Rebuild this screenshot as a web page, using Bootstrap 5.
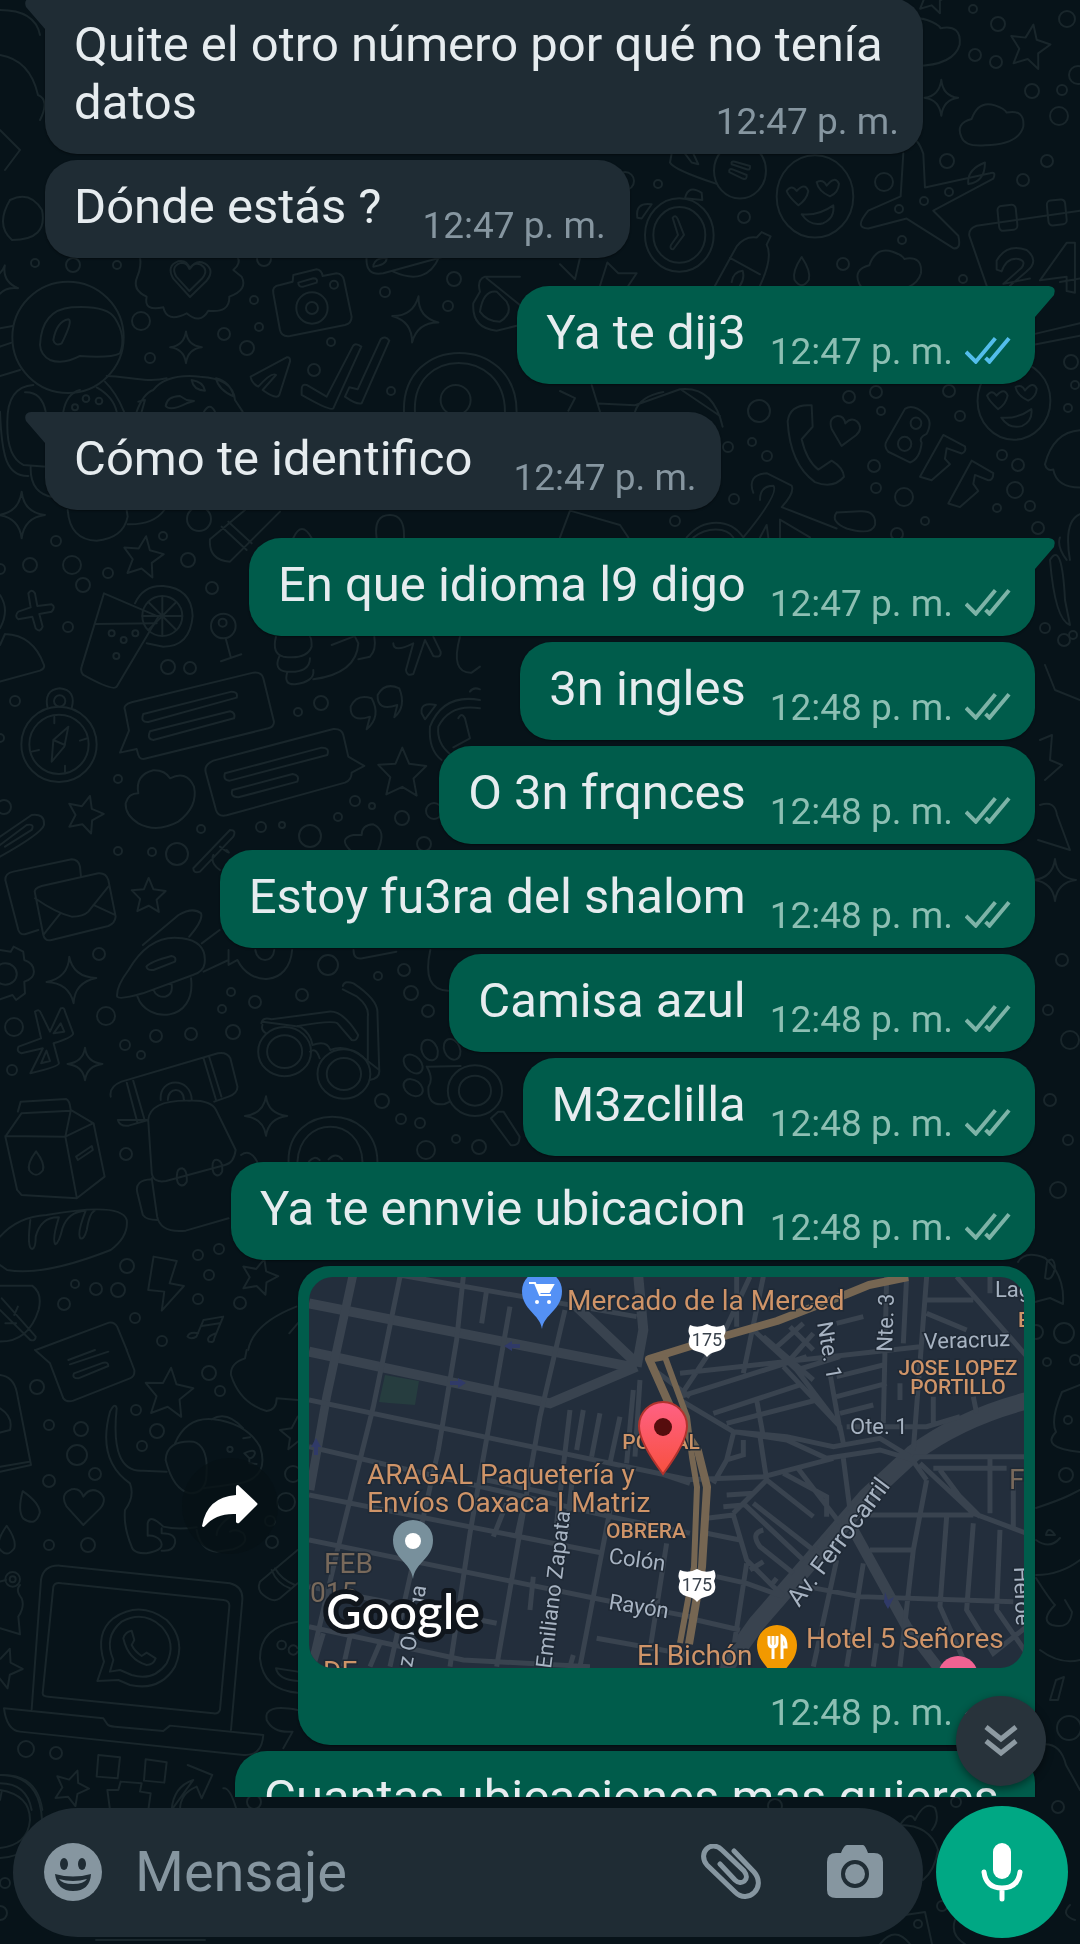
<!DOCTYPE html>
<html lang="es">
<head>
<meta charset="utf-8">
<meta name="viewport" content="width=device-width, initial-scale=1">
<title>Chat</title>
<link href="https://cdn.jsdelivr.net/npm/bootstrap@5.3.0/dist/css/bootstrap.min.css" rel="stylesheet">
<style>
:root{--bg:#071319;--in:#1f2c34;--out:#005c4b;--muted:#8696a0;--ink:#e6ecef}
body{background:var(--bg);color:var(--ink);font-family:Roboto,"Noto Sans",sans-serif;font-size:49px;line-height:58px}
.wallpaper{position:fixed;inset:0;width:100%;height:100%;z-index:-1;fill:none;stroke:#19262b;stroke-linecap:round;stroke-linejoin:round}
.wallpaper path,.wallpaper circle,.wallpaper rect,.wallpaper ellipse{vector-effect:non-scaling-stroke;stroke-width:2}
.chat{min-height:0}
.thread{margin-top:-2px;padding:0 45px 0 45px;gap:6px}
.bubble{position:relative;border-radius:32px;padding:18px 24px 22px 29px;gap:24px;box-shadow:0 1px 2px rgba(0,0,0,.4);white-space:nowrap;flex-shrink:0}
.bubble-in{background:var(--in);align-self:flex-start;gap:41px}
.bubble-out{background:var(--out);align-self:flex-end}
.turn{margin-top:22px}
.wrapping{white-space:normal;max-width:878px;width:100%;gap:0}
.tail-in{border-top-left-radius:0}
.tail-out{border-top-right-radius:0}
.tail-in::before,.tail-out::after{content:"";position:absolute;top:0;width:21px;height:34px;background:inherit}
.tail-out::after{left:calc(100% - 1px);clip-path:path("M0 0H15Q23 1 20 9L1 31V34H0Z")}
.tail-in::before{right:calc(100% - 1px);clip-path:path("M21 0H6Q-2 1 1 9L20 31V34H21Z")}
.stamp{font-size:37px;line-height:42px;color:var(--muted);align-self:flex-end;margin-bottom:-11px;gap:12px}
.wrapping .stamp{position:absolute;right:24px;bottom:11px;margin:0}
.bubble-out .stamp{color:#8dbfb3}
.ticks{width:46px;height:28px;fill:none;stroke:#7db3a7;stroke-width:4;margin-bottom:4px}
.read .ticks{stroke:#53bdeb}
.map-row{gap:20px}
.map-bubble{width:737px;max-width:100%;padding:11px 11px 22px;gap:24px}
.map-bubble .stamp{margin-right:13px;}
.map-view{display:block;width:100%;height:auto;border-radius:24px;background:#232e3c}
.map-view .road{fill:none;stroke:#39434f}
.map-view .poi{fill:#cf9468;font-size:28px;paint-order:stroke;stroke:#1f2935;stroke-width:3px}
.map-view .zone{fill:#cf9468;font-size:21px;font-weight:500;paint-order:stroke;stroke:#1f2935;stroke-width:3px}
.map-view .dim{fill:#78695b}
.map-view .street{fill:#a7b3c2;font-size:22px;paint-order:stroke;stroke:#1f2935;stroke-width:3px}
.map-view .avenue{font-size:25px}
.share{width:96px;height:96px;border-radius:50%;border:0;background:rgba(7,17,22,.75)}
.jump{position:absolute;right:34px;bottom:11px;width:90px;height:90px;border:0;border-radius:50%;background:#28333b;box-shadow:0 3px 8px rgba(0,0,0,.45)}
.last{width:800px;max-width:100%;height:140px}
.composer{padding:9px 12px 6px 13px;gap:13px}
.entry{height:129px;border-radius:65px;background:var(--in);padding:0 40px 0 31px;min-width:0}
.entry input{background:none;border:0;outline:0;color:var(--ink);font-size:56px;line-height:66px;width:0;min-width:0;margin-left:32px;padding:0}
.entry input::placeholder{color:var(--muted);opacity:1}
.tool{border:0;background:none;padding:0;color:var(--muted);flex:none}
.clip-tool{margin-right:66px}
.mic{width:132px;height:132px;border-radius:50%;border:0;background:#00a884;flex:none}
</style>
<script src="https://cdn.jsdelivr.net/npm/bootstrap@5.3.0/dist/js/bootstrap.bundle.min.js"></script>
</head>
<body class="vh-100 d-flex flex-column overflow-hidden">

<svg class="wallpaper" viewBox="0 0 1080 1944" preserveAspectRatio="xMidYMin slice" aria-hidden="true">
  <defs>
    <path id="star" d="M0-60L17-20L60-14L28 17L36 60L0 38L-40 57L-30 14L-60-17L-17-20Z"/>
    <path id="spark" d="M0-70Q6-8 70 0Q8 8 0 70Q-8 8-70 0Q-8-8 0-70Z"/>
    <path id="hrt" d="M0 55L-50 0Q-72-38-36-52Q-10-58 0-30Q18-58 44-46Q76-26 50 6Z"/>
    <path id="drop" d="M0-45Q32 0 24 26Q0 60-24 26Q-32 0 0-45Z"/>
    <path id="cloud" d="M-90 30Q-110-10-60-22Q-40-75 10-60Q40-50 45-40Q100-50 95 0Q80 50-20 52Q-80 56-90 30Z"/>
    <g id="love"><circle r="115"/><path d="M-50 25Q-80 0-85-15Q-70-35-55-15Q-30-40-20-15Q-25 10-50 25ZM45 0Q10-15 5-40Q25-50 35-30Q60-60 72-35Q70-10 45 0ZM-40 50Q10 55 55 25Q60 60 25 75Q-15 85-40 50Z"/></g>
    <g id="clock"><circle r="103"/><circle r="78"/><path d="M-20-48Q-12-58-5-45L14 0L-18 40Q-30 40-25 28L-4 0Z"/></g>
  </defs>

  <g transform="translate(0 250) scale(.3333)">
    <circle cx="204" cy="262" r="167"/><path d="M120 285Q125 180 215 172Q320 165 345 205Q380 260 360 310Q330 325 240 318Q190 345 150 330Q122 315 120 285ZM160 270Q170 215 205 208Q220 210 185 280Q165 290 160 270Z"/>
    <path d="M100 405Q20 410 22 520Q20 620 70 645L140 650M75 427Q125 425 137 485M190 485Q200 430 240 420M290 412Q340 440 350 485M320 378C380 378 440 400 500 385M315 395Q350 430 372 485M0 378L60 360M0 235L38 228M0 290L35 278M0 485C5 620 20 680 85 678M92 652Q90 730 160 742"/>
    <circle cx="258" cy="446" r="10"/><circle cx="297" cy="453" r="10"/><circle cx="225" cy="472" r="9"/>
    <path d="M420 20Q425 50 412 80Q395 120 440 140Q430 185 490 172Q500 220 560 190Q600 225 625 182Q690 190 688 140Q745 120 725 80L700 60Q725 40 712 20"/>
    <use href="#hrt" transform="translate(570 86)"/><use href="#hrt" transform="translate(568 80) scale(.78)"/>
    <path d="M410 485Q430 430 460 420Q500 370 600 380Q700 385 705 450L728 485M415 455L435 450L425 485M497 468Q500 440 540 438L560 450L582 453L560 460Q510 485 497 468ZM575 390Q610 395 615 422Q580 420 575 390ZM648 385Q690 395 702 440Q655 420 648 385ZM612 485Q630 455 645 485"/>
    <path d="M752 380L860 322Q872 320 870 335L838 435Q830 450 788 420L828 375Q815 365 775 410Q755 400 752 380ZM905 420Q905 400 920 405L980 440L1058 290Q1065 275 1084 290L1000 475Q992 485 905 435ZM1035 440L1048 412L1073 418L1142 268Q1155 255 1168 272L1085 460Q1070 465 1035 440Z"/>
    <path d="M820 130Q815 108 840 105L878 95L880 75L950 58Q965 60 968 78L1010 70Q1028 72 1032 90L1055 200Q1055 220 1035 225L870 258Q845 262 840 240ZM895 98L940 85Q955 85 950 98L910 110Q895 112 895 98Z"/>
    <circle cx="936" cy="174" r="47"/><circle cx="936" cy="174" r="18"/><circle cx="1002" cy="104" r="12"/>
    <path d="M1100 20Q1095 80 1150 70L1330 20M1180 65Q1280 110 1318 20M1120 45Q1130 20 1160 25Q1160 45 1120 50M1560 80H1455Q1430 90 1440 125L1420 160Q1415 235 1490 242L1560 225M1460 85L1560 165M1440 185Q1450 120 1490 125L1520 155Q1540 190 1500 215Q1460 215 1440 185Z"/>
    <path d="M1212 485C1205 250 1550 250 1550 485M1245 485C1235 290 1515 290 1515 485"/><circle cx="1367" cy="450" r="45"/>
    <use href="#spark" transform="translate(558 292) scale(.68)"/><use href="#spark" transform="translate(1246 208) rotate(8)"/><use href="#spark" transform="translate(65 795)"/><use href="#spark" transform="translate(0 100) rotate(15) scale(.8)"/>
  </g>

  <g transform="translate(560 0) scale(.3333 .3571)">
    <use href="#star" transform="translate(1410 128) rotate(10)"/><use href="#star" transform="translate(1120 -15) rotate(10) scale(.8)"/><use href="#spark" transform="translate(1144 274) scale(.72)"/>
    <use href="#cloud" transform="translate(1295 355)"/><use href="#cloud" transform="translate(988 765) "/><use href="#cloud" transform="translate(1090 125) scale(1.15)"/>
    <use href="#love" transform="translate(765 550)"/><use href="#love" transform="translate(1362 1122) scale(.95)"/><use href="#clock" transform="translate(358 658)"/>
    <path d="M232 610Q225 565 275 572L245 612ZM375 555Q385 515 425 540L427 560ZM335 430L330 455Q340 475 470 515M375 430L395 455L415 460L400 430"/>
    <circle cx="540" cy="478" r="78"/><path d="M515 460Q512 450 525 453L570 465Q572 478 560 474ZM508 482Q505 470 520 475L560 490Q562 505 548 500Z"/>
    <path d="M465 800L530 690Q555 660 590 665L605 650L632 662L620 685Q640 720 600 800M510 722L600 768M515 790Q520 760 548 758Q555 780 540 800M1030 430L1022 550L925 590Q880 640 925 640L1040 612L1180 695Q1205 700 1195 660L1120 590L1300 500Q1310 480 1290 485L1095 525L1090 430Q1070 380 1060 400M1225 515Q1220 475 1275 455Q1275 510 1225 515ZM1280 800L1228 660Q1225 640 1250 632L1560 590"/>
    <rect x="1315" y="575" width="55" height="70" rx="12" transform="rotate(-6 1342 610)"/><rect x="1463" y="560" width="55" height="70" rx="12" transform="rotate(-6 1490 595)"/>
    <path d="M1310 730Q1340 680 1400 700Q1440 730 1400 760L1350 800M1310 730V755L1325 760Q1340 720 1375 725Q1400 730 1385 750L1330 795L1410 780M1520 680L1440 785L1520 775V815L1545 820V680ZM1560 780L1500 790M1425 935L1560 905M1425 965L1560 940M120 800L142 735L175 765L230 765L205 800M0 740L45 782L60 722"/>
    <path d="M683 1180Q690 1130 755 1135L758 1195L725 1230Q740 1290 775 1315L815 1290Q850 1310 852 1335Q820 1370 765 1350Q690 1300 683 1180ZM1035 1145Q1060 1130 1095 1160Q1120 1180 1100 1215Q1075 1225 1085 1240Q1080 1285 1050 1295L985 1265Q970 1250 980 1235ZM1150 1218L1215 1250Q1220 1265 1205 1270L1160 1255L1155 1285L1170 1300L1115 1345L1080 1335ZM1235 1290L1300 1325Q1300 1345 1285 1345L1245 1330L1240 1355L1255 1375L1200 1420L1165 1410Z"/>
    <circle cx="1068" cy="1185" r="16"/><circle cx="1034" cy="1243" r="20"/><use href="#hrt" transform="translate(852 1208) scale(.75) rotate(10)"/><use href="#drop" transform="translate(725 760) scale(.9)"/>
    <path d="M95 1078L120 1153M115 1130L225 1135L360 1090Q460 1080 488 1195M365 1092L480 1165M225 1153Q240 1110 310 1098M0 1095L45 1115L25 1150M580 1380Q560 1330 620 1325L695 1360Q705 1380 665 1420L830 1480M600 1400Q600 1360 640 1360Q660 1380 550 1505M600 1505L620 1470L625 1505M660 1505V1455L750 1505M830 1435L900 1432Q950 1430 945 1470Q935 1500 860 1480Q810 1460 830 1435M380 1505C430 1450 510 1450 550 1505M400 1505C440 1475 500 1475 520 1505M0 1505L30 1430L180 1470L205 1505M1530 1568Q1510 1460 1560 1440M1560 1205Q1480 1210 1455 1300Q1460 1320 1480 1315Q1490 1365 1560 1365M1500 1505Q1490 1530 1520 1568"/>
  </g>

  <g transform="translate(0 510) scale(.3333)">
    <path d="M203 0Q210 90 290 92Q370 85 383 20L380 0M383 43Q460 45 493 0M735 0L630 88Q625 150 690 155L840 5M665 50L740 120M685 35L755 100M880 84Q905 30 935 84M1130 84Q1120 15 1170 15Q1215 15 1212 84"/>
    <use href="#star" transform="translate(430 138) rotate(8)"/><use href="#star" transform="translate(1207 785) scale(1.2)"/><use href="#star" transform="translate(256 910) rotate(15) scale(.9)"/><use href="#star" transform="translate(446 1155) scale(.85)"/>
    <path d="M85 250Q95 235 105 250L112 288L155 283Q168 290 155 305L118 312L128 350Q120 370 107 355L97 320L55 328Q42 318 55 305L92 292ZM312 250L475 320L350 530Q340 545 250 495Q240 485 245 470ZM287 342L470 340M0 255Q30 300 0 355M15 372Q100 375 132 465Q135 475 120 482L0 515M15 372L0 405"/>
    <circle cx="487" cy="318" r="60"/><path d="M405 280Q430 225 490 228Q575 235 578 318Q570 410 490 410L440 400M487 258V378M427 318H547M445 276L529 360M445 360L529 276"/>
    <circle cx="335" cy="370" r="9"/><circle cx="371" cy="390" r="9"/><circle cx="406" cy="370" r="9"/><circle cx="349" cy="438" r="9"/><circle cx="670" cy="348" r="37"/><circle cx="668" cy="338" r="12"/><path d="M677 385L692 440M663 454L724 433"/>
    <path d="M828 380Q815 430 850 440Q920 450 935 410Q935 385 930 380M838 440Q820 480 860 485Q930 490 930 445M862 487Q850 525 885 523Q945 515 940 480M940 508Q1070 490 1075 400L1065 380M995 405L1060 380M1075 448L1110 440Q1130 420 1123 380M1180 400Q1180 430 1240 400L1218 480Q1220 500 1240 492L1275 390L1300 438Q1325 445 1322 425L1300 380M1380 380Q1350 490 1415 488L1440 470"/>
    <circle cx="177" cy="703" r="113"/><circle cx="177" cy="703" r="89"/><circle cx="179" cy="573" r="17"/><path d="M143 595Q130 540 179 535Q230 540 215 595M205 650L160 690L155 755L193 710ZM160 690L195 705M163 620V640M195 767V787M95 725L117 720M240 692L262 685"/>
    <path d="M375 600Q368 585 395 577L760 488Q785 485 790 505L822 635Q822 650 805 655L440 745Q420 752 415 735L410 717L360 728L387 662ZM430 612L695 545Q715 545 710 563L445 636Q420 638 430 612ZM450 664L690 604Q708 608 702 625L460 690Q440 688 450 664ZM618 790Q610 765 640 752L1000 657Q1025 655 1030 675L1045 740L1093 768L1055 788Q1055 810 1035 818L680 916Q655 922 648 900ZM675 790L965 713Q990 712 982 735L690 812Q668 812 675 790ZM697 840L878 792Q900 795 892 815L715 862Q690 862 697 840Z"/>
    <path d="M1100 658L1110 620Q1050 640 1052 590Q1070 550 1115 565Q1145 620 1100 658ZM1183 622L1192 585Q1130 605 1133 555Q1155 515 1198 535Q1220 590 1183 622ZM1265 610Q1260 575 1308 585L1275 628ZM1440 570Q1330 550 1290 650Q1285 720 1325 750M1440 595Q1350 580 1315 650Q1310 700 1350 732M1375 625Q1385 605 1395 625L1410 685L1360 712M1410 545Q1420 530 1440 538"/>
    <path d="M415 850Q405 795 460 781Q495 780 510 805Q560 780 582 830Q595 890 535 935Q470 970 415 940Q375 915 377 880Q385 850 415 850Z"/>
    <path d="M0 980L95 915Q135 910 132 945Q125 970 0 1040M0 1005L80 945Q105 940 95 960L15 1010M580 1075L690 960Q710 960 700 980L600 1085Q580 1092 580 1075ZM640 1035Q630 1060 660 1080M660 1010Q700 1040 680 1020M1050 1020Q1015 985 1060 975L1085 975Q1085 945 1120 943Q1160 960 1135 1018"/>
    <path d="M115 1260L75 1273Q60 1275 55 1260L16 1110Q15 1090 40 1085L215 1048Q235 1048 240 1070L243 1100M105 1150Q100 1135 125 1128L295 1090Q318 1088 325 1110L347 1220Q345 1240 325 1248L155 1290Q135 1295 130 1275ZM105 1165Q170 1210 215 1220Q250 1220 265 1205L325 1130M130 1275L180 1212M280 1185L345 1215"/>
  </g>

  <g transform="translate(0 900) scale(.3571 .3333)">
    <path d="M0 150L30 155L38 140L65 155L68 180Q95 190 95 215Q95 235 68 245L70 280L45 300L35 285L0 298"/><circle cx="15" cy="222" r="32"/>
    <use href="#spark" transform="translate(200 240) rotate(-5)"/><use href="#spark" transform="translate(238 492) scale(.7)"/><use href="#spark" transform="translate(745 648) scale(.85)"/>
    <path d="M328 290Q325 260 360 210Q420 100 510 115Q580 125 573 190Q570 215 540 225L400 280Q335 300 328 290ZM410 200Q420 185 480 168Q495 170 490 185L430 210Q412 212 410 200ZM400 135L500 45Q540 20 563 40Q570 60 530 110M565 130L615 90M570 215L640 180M385 290C410 370 550 370 535 235M430 270C440 300 490 300 480 250M640 150V195L665 180M665 180C700 260 810 260 818 150M715 150C720 190 765 190 768 150"/>
    <path d="M98 335Q110 325 115 340L140 395L170 325Q180 320 182 335L205 400Q205 412 150 430L165 490Q165 500 85 520L120 445L60 460Q45 455 52 440L115 415ZM150 400L170 370L180 395ZM115 490L130 452L140 483Z"/>
    <path d="M50 635L58 605L185 597Q195 600 198 630L262 670L293 830L215 895L60 885L48 870L15 710L60 640L198 632L183 710L15 708M183 710L260 670M183 710L215 893M213 770L257 738L260 750L218 780Z"/><use href="#drop" transform="translate(101 790) scale(.8)"/>
    <path d="M310 590Q305 560 340 545L610 460Q635 455 645 475L665 560Q665 580 640 590L600 605M415 660L360 677Q335 680 330 660ZM355 548L385 668M373 542L405 660M570 475L605 600M585 468L620 590M450 600C445 530 535 530 537 600M470 600C470 560 515 560 515 600M415 660Q420 600 530 602Q590 600 605 630L660 750Q655 790 630 795L465 843Q430 850 425 820ZM425 835L440 950Q450 1000 520 992L640 955M425 838Q375 840 385 880L400 945Q410 960 440 960M675 765Q700 745 720 785M495 830Q495 805 510 805Q525 810 523 845Q515 860 505 855Q495 850 495 830ZM595 800Q595 775 610 780Q625 785 622 815Q615 830 605 825Q595 820 595 800Z"/>
    <path d="M0 1010Q50 950 130 945Q340 905 355 960Q360 1010 310 1050Q120 1130 20 1110L0 1095M85 960Q75 1045 90 1047Q100 1045 100 1010Q115 950 165 952Q145 1020 155 1033Q165 1030 175 985Q190 935 240 932Q215 1000 225 1015Q235 1020 243 990Q250 940 265 932"/>
    <path d="M732 370Q735 350 760 358L920 335Q960 330 1003 405Q1000 425 985 420L945 370Q930 360 835 378M735 375Q730 390 745 400M735 365L840 380Q870 400 875 435Q915 420 925 450Q970 430 1020 475L1062 510Q1065 535 1035 540M960 258Q965 240 990 250Q1060 300 1057 340L1062 510M960 268L1000 290Q1035 320 1030 350V480M895 475Q885 440 868 455"/><circle cx="797" cy="455" r="74"/><circle cx="797" cy="455" r="49"/><circle cx="963" cy="522" r="74"/><circle cx="963" cy="522" r="48"/>
    <circle cx="1330" cy="572" r="76"/><circle cx="1330" cy="572" r="45"/><path d="M1375 655L1395 635L1410 635L1455 710Q1455 740 1430 735ZM1195 500L1290 498M1195 500Q1215 535 1200 560Q1195 620 1245 612L1260 605"/><ellipse cx="1203" cy="450" rx="22" ry="32" transform="rotate(-20 1203 450)"/><ellipse cx="1266" cy="448" rx="22" ry="32" transform="rotate(-20 1266 448)"/><ellipse cx="1157" cy="492" rx="22" ry="32" transform="rotate(-40 1157 492)"/><ellipse cx="1157" cy="563" rx="22" ry="30" transform="rotate(-50 1157 563)"/>
    <path d="M808 785C805 605 1055 605 1057 785M833 785C840 645 1010 645 1015 785M865 785Q880 765 895 780M920 778Q940 755 958 778M1205 150Q1180 270 1255 272M990 150Q990 180 1015 175L1110 155M430 1070L495 1083L475 1150L515 1158L453 1232L460 1175L415 1170ZM0 1157H90Q120 1180 108 1230Q80 1325 0 1325M5 1195L100 1310Q100 1325 85 1320L0 1230M15 1270H45M40 1245L50 1220M100 1350L305 1268Q320 1265 328 1280L355 1350M570 1260L625 1250L600 1315Q600 1330 585 1325Q575 1310 605 1300M570 1260L550 1310Q535 1320 525 1310Q530 1295 555 1300M565 1278L615 1270M695 1350Q710 1270 830 1220M810 1300L850 1250"/>
    <use href="#star" transform="translate(727 1127) rotate(15) scale(.85)"/>
  </g>

  <g transform="translate(0 1350) scale(.3333)">
    <path d="M105 0L150 40L190 145Q200 158 220 152L390 85Q405 80 403 60L380 0M205 30L285 0M210 43L325 5M222 70L310 38Q325 35 325 48L235 85Q215 85 222 70ZM0 75Q40 80 50 125L93 345L0 365M0 350L88 335M0 175Q40 200 30 240L0 248"/>
    <use href="#star" transform="translate(507 125) rotate(5) scale(1.2)"/><use href="#star" transform="translate(215 1310) rotate(20) scale(.85)"/><use href="#star" transform="translate(10 950) rotate(20) scale(.95)"/><use href="#hrt" transform="translate(250 470) scale(1)"/>
    <use href="#drop" transform="translate(85 470) rotate(-20) scale(1.1)"/><use href="#drop" transform="translate(20 570) scale(.95)"/>
    <path d="M330 185Q345 155 350 175Q330 370 430 362L500 365M330 185Q290 330 390 400Q405 440 375 480Q370 530 395 590Q400 610 440 610Q500 600 480 570Q465 555 443 557V520Q450 490 490 530Q530 540 590 532M485 535V550Q530 550 525 580Q520 605 485 602M525 280Q560 200 640 208Q740 220 780 290Q810 380 720 400Q650 410 610 415M635 208Q680 180 730 235M497 330Q500 270 580 275Q630 290 618 390Q610 430 570 430Q520 420 497 330ZM590 540Q600 600 650 605L700 598Q750 580 730 550Q710 535 690 545M650 555Q650 530 690 500M730 265L750 262M733 310Q765 295 765 310Q760 325 748 325ZM748 325V340L770 342"/>
    <circle cx="690" cy="298" r="8"/><path d="M740 0L735 25Q690 40 693 75Q720 160 800 183Q830 180 830 145L893 150M893 200L875 235L840 240L870 265L865 298L893 275"/>
    <path d="M95 1078L123 690Q130 645 180 647L690 700Q730 710 727 750L693 1140M128 1030L160 710Q165 695 185 700L670 750Q690 752 688 770L660 1080Q655 1093 640 1090L145 1040Q128 1040 128 1030ZM12 1075L310 1105L320 1120Q325 1130 345 1130L490 1143L510 1127L790 1155Q785 1220 730 1215L60 1145Q20 1140 12 1075Z"/>
    <path d="M292 993L312 935Q285 850 340 805Q420 750 500 810Q560 870 525 950Q480 1025 390 1005L355 990ZM330 965L340 930Q310 860 365 815Q430 780 485 830Q530 880 500 940Q460 995 395 975L360 960ZM370 865Q375 845 395 842L403 870L395 885Q405 905 425 918L440 908L467 925Q460 945 440 945Q385 930 370 865Z"/>
    <path d="M893 600L780 695Q770 720 790 735Q820 760 840 745L893 700M815 660Q830 700 870 715M825 655Q845 690 885 705M893 815Q780 830 780 925Q790 1020 893 1028M893 895A14 14 0 1 0 893 905M828 955L893 965M828 955Q835 990 893 993M893 1080Q790 1060 800 1110Q820 1150 878 1145L850 1195"/><circle cx="845" cy="885" r="13"/><circle cx="38" cy="688" r="22"/><circle cx="38" cy="688" r="9"/>
    <path d="M0 695L18 690M60 705Q45 720 65 745Q75 770 55 800L60 853L0 835M295 1215L360 1222L353 1285L290 1280ZM437 1228L500 1237L493 1298L432 1292ZM330 1380L322 1320H355L362 1295L425 1300L420 1325L452 1330L445 1380M563 1245L637 1275L605 1345L590 1310Q540 1330 540 1380M515 1380Q520 1310 580 1290ZM670 1315Q690 1310 710 1380M0 1275Q110 1270 127 1380M0 1300Q80 1300 95 1380M5 1325L0 1350"/>
  </g>

  <!-- right margin and composer strip -->
  <path d="M1018 1262Q1025 1250 1045 1258Q1065 1275 1063 1304L1050 1298L1035 1302M1047 1262Q1054 1255 1055 1268Q1052 1282 1045 1278ZM1080 1385L1062 1392Q1050 1420 1056 1432Q1040 1448 1080 1452M1036 1508Q1060 1500 1070 1495L1080 1490M1036 1575Q1060 1575 1080 1560M1036 1578Q1050 1600 1055 1605Q1040 1620 1052 1625Q1070 1630 1072 1612L1065 1600M1040 1650Q1060 1665 1080 1660M1056 1680L1064 1677L1058 1700L1050 1700ZM1036 1540Q1050 1550 1060 1538M1046 1535Q1048 1525 1055 1535Z"/>
  <path d="M1038 1745Q1060 1740 1066 1765L1080 1790M900 1825Q910 1810 915 1820Q925 1800 935 1808Q940 1820 932 1830M900 1825Q930 1825 938 1850Q935 1870 923 1880M1070 1905Q1060 1915 1075 1920M905 1915L925 1912L932 1944M955 1920Q950 1935 965 1944M880 1944Q895 1925 910 1944M0 1775Q40 1775 42 1820Q40 1855 0 1858M0 1790Q30 1795 30 1820Q28 1845 0 1848M96 1940L205 1940M1045 665L1055 690L1080 700M1040 740L1052 735L1050 760L1062 765L1045 780M1040 805Q1055 800 1057 815L1070 850L1038 840M1050 560Q1062 540 1065 600L1070 625Q1055 620 1050 560M40 120Q50 100 38 95Q30 60 0 55M0 130L20 150L5 170M0 10Q35 10 40 35M10 200Q30 190 42 210Q48 240 12 240Q-5 225 10 200"/>
  <use href="#spark" transform="translate(1055 880) scale(.3)"/>
  <g id="bubbles"></g>
</svg>

<main class="chat flex-grow-1 position-relative overflow-hidden">
  <div class="thread d-flex flex-column">
    <div class="bubble bubble-in tail-in wrapping d-flex justify-content-between"><span>Quite el otro número por qué no tenía datos</span><time class="stamp">12:47 p. m.</time></div>
    <div class="bubble bubble-in d-flex"><span>Dónde estás ?</span><time class="stamp">12:47 p. m.</time></div>
    <div class="bubble bubble-out tail-out turn read d-flex"><span>Ya te dij3</span><span class="stamp d-flex align-items-center"><time>12:47 p. m.</time><svg class="ticks" viewBox="0 0 47 28"><path d="M1 16L11 26L31 2M21 22L25 26L45 2"/></svg></span></div>
    <div class="bubble bubble-in tail-in turn d-flex"><span>Cómo te identifico</span><time class="stamp">12:47 p. m.</time></div>
    <div class="bubble bubble-out tail-out turn d-flex"><span>En que idioma l9 digo</span><span class="stamp d-flex align-items-center"><time>12:47 p. m.</time><svg class="ticks" viewBox="0 0 47 28"><path d="M1 16L11 26L31 2M21 22L25 26L45 2"/></svg></span></div>
    <div class="bubble bubble-out d-flex"><span>3n ingles</span><span class="stamp d-flex align-items-center"><time>12:48 p. m.</time><svg class="ticks" viewBox="0 0 47 28"><path d="M1 16L11 26L31 2M21 22L25 26L45 2"/></svg></span></div>
    <div class="bubble bubble-out d-flex"><span>O 3n frqnces</span><span class="stamp d-flex align-items-center"><time>12:48 p. m.</time><svg class="ticks" viewBox="0 0 47 28"><path d="M1 16L11 26L31 2M21 22L25 26L45 2"/></svg></span></div>
    <div class="bubble bubble-out d-flex"><span>Estoy fu3ra del shalom</span><span class="stamp d-flex align-items-center"><time>12:48 p. m.</time><svg class="ticks" viewBox="0 0 47 28"><path d="M1 16L11 26L31 2M21 22L25 26L45 2"/></svg></span></div>
    <div class="bubble bubble-out d-flex"><span>Camisa azul</span><span class="stamp d-flex align-items-center"><time>12:48 p. m.</time><svg class="ticks" viewBox="0 0 47 28"><path d="M1 16L11 26L31 2M21 22L25 26L45 2"/></svg></span></div>
    <div class="bubble bubble-out d-flex"><span>M3zclilla</span><span class="stamp d-flex align-items-center"><time>12:48 p. m.</time><svg class="ticks" viewBox="0 0 47 28"><path d="M1 16L11 26L31 2M21 22L25 26L45 2"/></svg></span></div>
    <div class="bubble bubble-out d-flex"><span>Ya te ennvie ubicacion</span><span class="stamp d-flex align-items-center"><time>12:48 p. m.</time><svg class="ticks" viewBox="0 0 47 28"><path d="M1 16L11 26L31 2M21 22L25 26L45 2"/></svg></span></div>

    <div class="map-row d-flex align-items-center justify-content-end">
      <button class="share d-flex align-items-center justify-content-center p-0" aria-label="Reenviar"><svg width="56" height="42" viewBox="0 0 56 42"><path fill="#fff" d="M36 0Q34 0 34 2V10Q5 12 0 41Q1 43 3 41Q14 28 34 29V37Q35 39 37 38L55 20Q56 19 55 18Z"/></svg></button>
      <div class="bubble bubble-out map-bubble d-flex flex-column">
        <svg class="map-view" viewBox="0 0 715 391" role="img" aria-label="Mapa">
          <path d="M76 98L110 104L106 128L80 126L70 125Z" fill="#263d3f"/>
          <g class="road" transform="translate(-19 -27) scale(.3333)" stroke-width="15">
            <g stroke-width="30"><path d="M57 160L1020 350M57 305L780 460L1040 350M1045 80L1060 240L1040 350M860 170L1040 340"/><path d="M190 70L110 440L60 720" stroke-width="26"/></g>
            <path d="M330 80L250 470L140 910L60 1250M520 80L500 270L445 600L300 1250M590 120L575 220M660 170L540 850L480 1250M825 180L750 500L620 1250M300 70L1040 200M57 450L1200 690M57 590L960 800L1200 850M57 735L940 910M57 870L940 1050L1200 1100M57 1010L620 1120M57 1130L520 1230L900 1250M840 480L800 820M880 480L860 600M930 490L905 620M990 500L960 640M1030 420L1010 640M1050 390L1035 620M1080 350L1200 440M850 660L830 840M960 780L870 1250M1130 880L1080 1200M920 1165L1200 1215M650 760L610 860M700 770L680 860M730 980L720 1080M850 1215L840 1250M1200 700L1110 670M590 690L820 740M100 1150L70 1250M180 1160L160 1250M270 1180L240 1250"/>
          </g>
          <g class="road" transform="translate(371 -27) scale(.3333)" stroke-width="15">
            <path d="M1050 450Q850 500 700 610L560 740L230 1120L130 1260" stroke-width="52"/>
            <path d="M520 840L680 1130L780 1260M600 700L420 900" stroke-width="32"/>
            <path d="M170 60V230M210 80L140 230L0 440M250 80L190 370M0 370L720 290M0 300L200 240M220 240L350 360L480 530M350 360L480 320M0 440L380 320M0 450L160 545L320 570L440 625L600 600L700 630M160 545L320 560L460 590L600 565L690 620M100 490L360 405M140 520L410 450M230 450L250 560M310 350L480 530L490 580M280 300L370 220M320 340L400 250M250 260L400 390M330 230L400 300M450 370L480 540M470 380L610 345M470 440L620 400M480 490L580 465M620 80L610 520M680 80L670 280M740 80L700 600M730 150H880M740 190L860 240M830 80L1050 330M930 80V130M500 530L740 530L840 500M660 400V450M760 440V520M880 440L890 490M470 220L550 200M0 690L250 680L460 625M160 550L140 630L100 700M190 570V615L140 630M240 560L260 690L400 800M310 670L440 740V800M350 650L480 820M160 790L260 690M140 735L220 730M130 770L190 765M80 805L160 795L200 930L310 1040M80 850L180 870M220 760L400 900M190 760L370 930M250 840Q210 850 240 890L340 970M210 960L250 935M110 980L200 1000L310 1040M270 1010L290 985M490 625L510 780M740 690L700 900L660 1250M740 690L690 620M560 795H880M570 900H700M380 1010L540 1040L1000 1055M200 940L160 1200M50 1110L180 1140M470 930L400 1250M550 940L500 1250M800 800L780 1070L860 1250M880 820L860 1080L940 1210L1040 1130M960 840L950 1080L1040 1210M700 620H1040M760 655H980M720 640L880 790L1040 850M930 620V790M1000 660V830M590 1180L580 1250M780 660L840 740L900 800"/>
          </g>
          <g fill="none" stroke="#766652" stroke-linejoin="round">
            <path d="M599 0L560 8L538 17L468 44L398 64L340 82L365 138L389 174L398 210L393 290L380 367" stroke-width="8"/><path d="M345 82L356 80L378 140L383 180L388 210L385 290L371 366" stroke-width="6"/>
          </g>
          <g fill="#303a68"><path d="M195 69l8-5v3h8v4h-8v3zM157 106l-8-5v3h-8v4h8v3zM7 161l5 9h-3v8H5v-8H2zM576 315l3 8 6-3-6 12-4-7z"/></g>
          <text class="poi" x="258" y="33">Mercado de la Merced</text>
          <text class="poi" x="58" y="207">ARAGAL Paquetería y</text><text class="poi" x="58" y="235">Envíos Oaxaca I Matriz</text>
          <text class="poi dim" x="15" y="296">FEB</text><text class="poi dim" x="1" y="325">015</text><text class="poi" x="14" y="404">DE</text>
          <text class="poi" x="328" y="388">El Bichón</text><text class="poi" x="497" y="371">Hotel 5 Señores</text>
          <text class="zone" x="352" y="172" text-anchor="middle">PORTAL</text><text class="zone" x="337" y="261" text-anchor="middle">OBRERA</text>
          <text class="zone" x="649" y="98" text-anchor="middle">JOSE LOPEZ</text><text class="zone" x="649" y="117" text-anchor="middle">PORTILLO</text><text class="zone" x="709" y="50">E</text><text class="poi dim" x="700" y="212">F</text>
          <text class="street" x="686" y="20">Lag</text><text class="street" x="615" y="72" transform="rotate(-2 615 72)">Veracruz</text><text class="street" x="541" y="157">Ote. 1</text>
          <text class="street" transform="translate(583 75) rotate(-88)">Nte. 3</text><text class="street" transform="translate(508 46) rotate(80)">Nte. 1</text>
          <text class="street avenue" transform="translate(490 331) rotate(-53)">Av. Ferrocarril</text><text class="street" transform="translate(242 392) rotate(-83)">Emiliano Zapata</text><text class="street" transform="translate(103 391) rotate(-80)">z Ortega</text>
          <text class="street" transform="translate(299 286) rotate(8)">Colón</text><text class="street" transform="translate(299 332) rotate(9)">Rayón</text><text class="street" transform="translate(705 290) rotate(88)">Heroe</text>
          <g transform="translate(398 63)"><path d="M-17-15Q-9-11 0-16Q9-11 17-15Q20-9 17-4Q22 9 8 12Q3 13 0 17Q-3 13-8 12Q-22 9-17-4Q-20-9-17-15Z" fill="#fff"/><text y="6" text-anchor="middle" font-size="18" fill="#39424c">175</text></g>
          <g transform="translate(388 308)"><path d="M-17-15Q-9-11 0-16Q9-11 17-15Q20-9 17-4Q22 9 8 12Q3 13 0 17Q-3 13-8 12Q-22 9-17-4Q-20-9-17-15Z" fill="#fff"/><text y="6" text-anchor="middle" font-size="18" fill="#39424c">175</text></g>
          <path d="M233 52C231 37 213 33 213 14A20 20 0 0 1 253 14C253 33 235 37 233 52Z" fill="#5491f5"/><path d="M220 6H226L231 18H242M227 8H244L240 15H230" fill="none" stroke="#fff" stroke-width="2"/><path d="M227 8H244L240 15H230Z" fill="#fff"/><circle cx="228" cy="25" r="2" fill="#fff"/><circle cx="240" cy="25" r="2" fill="#fff"/>
          <path d="M104 302C102 285 84 282 84 263A20 20 0 0 1 124 263C124 282 106 285 104 302Z" fill="#78909c"/><circle cx="104" cy="264" r="8" fill="#fff"/>
          <path d="M468 408C466 393 448 387 448 368A20 20 0 0 1 488 368C488 387 470 393 468 408Z" fill="#f29900"/><path d="M460 359V366Q460 370 464 370Q468 370 468 366V359M464 359V382M473 382V359Q477 361 477 370H473" fill="none" stroke="#fff" stroke-width="3"/>
          <circle cx="649" cy="399" r="20" fill="#f06292"/>
          <defs><linearGradient id="pinfill" x1="0" y1="0" x2="0" y2="1"><stop offset="0" stop-color="#ff6184"/><stop offset="1" stop-color="#f8503f"/></linearGradient></defs>
          <path d="M354 197Q330 165 330 149A24 24 0 1 1 378 149Q378 165 354 197Z" fill="url(#pinfill)" stroke="#b3332d" stroke-width="2"/><circle cx="354" cy="150" r="9" fill="#560d0d"/>
          <text x="17" y="352" font-family="Lato, sans-serif" font-size="49" font-weight="500" fill="#fff" stroke="#10161d" stroke-width="10" stroke-linejoin="round" paint-order="stroke">Google</text>
        </svg>
        <span class="stamp d-flex align-items-center"><time>12:48 p. m.</time><svg class="ticks" viewBox="0 0 47 28"><path d="M1 16L11 26L31 2M21 22L25 26L45 2"/></svg></span>
      </div>
    </div>
    <div class="bubble bubble-out last">Cuantas ubicaciones mas quieres</div>
  </div>
  <button class="jump d-flex align-items-center justify-content-center p-0" aria-label="Ir al final"><svg width="34" height="32" viewBox="0 0 34 32" fill="none" stroke="#8d9aa2" stroke-width="5"><path d="M2 2L17 14L32 2M2 16L17 28L32 16"/></svg></button>
</main>

<form class="composer d-flex align-items-center">
  <div class="entry flex-grow-1 d-flex align-items-center">
    <button type="button" class="tool d-flex" aria-label="Emojis"><svg width="59" height="58" viewBox="0 0 59 58"><circle cx="29" cy="29" r="29" fill="#8696a0"/><g fill="#1f2c34"><ellipse cx="20" cy="21" rx="4" ry="6"/><ellipse cx="38" cy="21" rx="4" ry="6"/><path d="M11 31Q29 36 47 31Q46 48 29 48Q13 48 11 31Z"/></g><path d="M15 36Q29 40 43 36Q40 41 29 41Q18 41 15 36Z" fill="#8696a0"/></svg></button>
    <input class="flex-grow-1" type="text" placeholder="Mensaje" aria-label="Mensaje">
    <button type="button" class="tool clip-tool d-flex" aria-label="Adjuntar"><svg width="60" height="56" viewBox="0 0 60 56" fill="none" stroke="#8696a0" stroke-width="5" stroke-linecap="round"><path d="M33 7L53 28C66 43 47 61 34 48L6 21C-4 9 10-5 21 6L43 27C50 36 40 42 34 36L19 20"/></svg></button>
    <button type="button" class="tool d-flex" aria-label="Cámara"><svg width="56" height="54" viewBox="0 0 56 54"><path d="M20 0H36Q38 0 41 8H47Q56 8 56 17V45Q56 53 47 53H9Q0 53 0 45V17Q0 8 9 8H14Q17 0 20 0Z" fill="#8696a0"/><circle cx="28" cy="29" r="12" fill="none" stroke="#1f2c34" stroke-width="4"/></svg></button>
  </div>
  <button type="button" class="mic d-flex align-items-center justify-content-center p-0" aria-label="Grabar audio"><svg width="42" height="59" viewBox="0 0 42 59"><rect x="12" width="18" height="36" rx="9" fill="#fff"/><path d="M3 29Q5 45 21 45Q37 45 39 29M21 46V56" fill="none" stroke="#fff" stroke-width="5" stroke-linecap="round"/></svg></button>
</form>

<script>
// small rings scattered over the wallpaper: x, y, radius
const rings = [[35,263,4],[73,265,7],[117,265,4],[141,321,9],[150,358,5],[224,334,6],[259,327,4],[254,300,4],[247,348,7],[314,370,6],[331,342,4],[385,292,5],[454,279,7],[448,306,5],[391,391,4],[264,259,7],
[973,9,4],[998,24,7],[975,55,6],[996,62,6],[1067,19,8],[1032,91,7],[1062,90,5],[1059,116,9],[1078,75,9],[947,161,7],[1047,161,6],[1023,180,6],[949,192,4],[924,201,4],[899,209,4],[884,182,9],[744,217,6],[902,240,4],[843,264,6],[963,279,4],[658,184,4],[625,181,9],[849,397,6],[876,392,6],[949,391,6],[881,411,4],[960,416,5],[759,411,11],[728,447,5],[752,442,4],[767,456,5],[874,466,6],[876,488,5],[904,497,9],[1002,455,5],[1018,465,6],[1015,490,8],[997,508,4],[1030,506,5],[1071,362,7],[1075,385,4],[1068,408,4],[734,499,5],[925,521,4],[1038,528,6],[675,521,5],[897,534,6],
[56,541,5],[163,536,4],[199,519,12],[30,565,7],[72,565,9],[108,573,5],[83,585,7],[188,560,7],[212,588,6],[0,569,5],[68,627,5],[168,667,7],[190,668,6],[15,701,5],[0,738,4],[298,712,4],[321,703,7],[118,779,4],[4,807,7],[355,801,5],[372,806,3],[402,818,7],[338,817,4],[201,829,4],[261,827,5],[282,825,3],[310,836,11],[118,851,4],[152,852,4],[177,854,11],[99,954,6],[434,811,8],[424,844,7],
[14,1027,9],[106,1016,9],[12,1070,5],[125,1045,5],[141,1055,4],[156,1036,6],[191,1034,6],[233,1032,7],[222,1009,4],[231,992,4],[255,1002,6],[302,995,6],[328,965,10],[378,976,4],[404,970,6],[411,993,7],[428,1011,6],[126,1154,6],[382,1101,7],[401,1119,5],[420,1123,5],[426,1150,9],[456,1139,4],[479,1147,7],[127,1266,7],[75,1284,4],[96,1289,6],[118,1290,7],[64,1304,6],[135,1318,5],[162,1341,5],[198,1255,5],[219,1249,5],[209,1275,5],[198,1299,5],[240,1303,6],
[37,1387,7],[49,1425,5],[81,1429,7],[77,1455,10],[95,1474,6],[49,1481,6],[136,1410,5],[157,1431,7],[142,1446,5],[209,1373,7],[220,1391,5],[286,1502,9],[272,1542,6],[49,1545,5],[88,1545,7],[293,1474,8],[270,1521,5],[26,1749,8],[56,1753,6],[254,1802,7],[5,1883,5],[0,1913,7],[1064,1333,10],[1047,1362,4],[1075,1360,5],[1036,1332,7],[1069,1728,12],[1058,1807,6],[956,1802,5],[918,1924,4],[942,1906,5],[775,1806,7],[1066,1475,7],[1064,640,6],[1045,628,5],[1073,635,4],[1068,1420,4],[1062,960,6],[1048,1010,5],[1070,1040,9],[1050,1100,6],[1068,1140,5],[1058,1190,8]];
document.getElementById('bubbles').innerHTML = rings.map(r => `<circle cx="${r[0]}" cy="${r[1]}" r="${r[2]}"/>`).join('');
</script>
</body>
</html>
